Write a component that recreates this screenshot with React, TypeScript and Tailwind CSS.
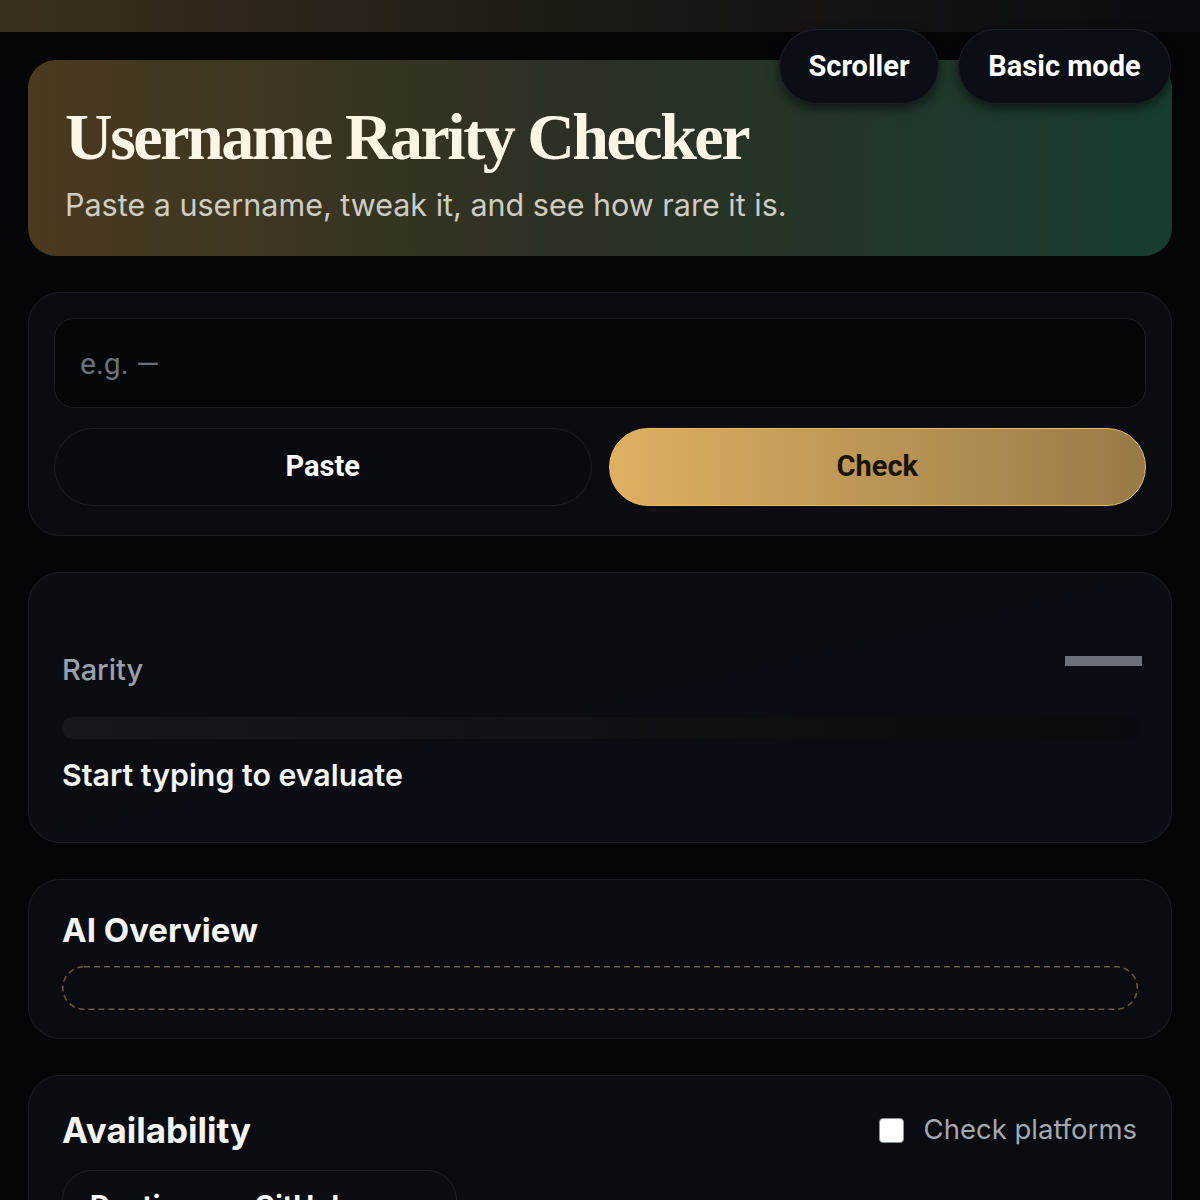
import React from "react";

export default function App() {
  return (
    <div className="min-h-[1200px] w-full bg-[#040507] relative overflow-hidden" style={{ fontFamily: "Inter, 'Noto Sans', sans-serif" }}>
      <div className="h-8 w-full bg-gradient-to-r from-[#3b301f] via-[#1c1914] to-[#0a0c12]" />
      <div className="absolute top-[29px] right-[29px] flex gap-[19px] z-10 font-['Roboto',sans-serif]">
        <button className="h-[75px] w-[160px] rounded-full bg-[#0b0e14] border border-[#1d2027] text-white text-[29px] font-bold shadow-[0_4px_12px_rgba(0,0,0,0.6)]">Scroller</button>
        <button className="h-[75px] w-[213px] rounded-full bg-[#0b0e14] border border-[#1d2027] text-white text-[29px] font-bold shadow-[0_4px_12px_rgba(0,0,0,0.6)]">Basic mode</button>
      </div>
      <div className="px-[28px] pt-[28px] flex flex-col gap-[36px]">
        <div className="h-[196px] rounded-[28px] bg-gradient-to-r from-[#4a3a1f] via-[#2a3024] to-[#173d30] pl-[37px] pt-[42px]">
          <h1 className="text-[66px] leading-[70px] font-bold text-[#fbf5e6] tracking-[-2.5px]" style={{ fontFamily: "'Liberation Serif', 'Times New Roman', serif" }}>Username Rarity Checker</h1>
          <p className="mt-[14px] text-[30.5px] leading-[38px] text-[#cfcdc2]">Paste a username, tweak it, and see how rare it is.</p>
        </div>

        <div className="rounded-[32px] border border-[#1b1e25] bg-[#0a0c11] px-[25px] pt-[25px] pb-[29px] flex flex-col gap-[20px]">
          <div className="h-[90px] rounded-[20px] border border-[#1b1e25] bg-[#05060a] flex items-center px-[25px]">
            <span className="text-[30px] text-[#6d7179] font-['Roboto',sans-serif]">e.g. —</span>
          </div>
          <div className="flex gap-[17px] font-['Roboto',sans-serif]">
            <button className="flex-1 h-[78px] rounded-full border border-[#1b1e25] bg-[#090b10] text-white text-[29px] font-bold">Paste</button>
            <button className="flex-1 h-[78px] rounded-full border-[1.5px] border-[#ecbc6a] bg-gradient-to-r from-[#deb062] to-[#987a48] text-[#17130b] text-[29px] font-bold">Check</button>
          </div>
        </div>

        <div className="h-[271px] rounded-[32px] border border-[#1b1e25] bg-gradient-to-br from-[#0b0d12] to-[#0a0d14] px-[33px] pt-[77px]">
          <div className="flex items-center justify-between h-[40px]">
            <span className="text-[29px] font-medium text-[#9aa0aa]">Rarity</span>
            <div className="w-[77px] h-[10px] bg-[#6c7079] mb-[18px] mr-[-4px]" />
          </div>
          <div className="mt-[27px] h-[22px] rounded-full bg-gradient-to-r from-[#16181d] to-[#090b0f]" />
          <div className="mt-[16px] text-[30.3px] leading-[40px] font-semibold text-[#f4f4f2]">Start typing to evaluate</div>
        </div>

        <div className="h-[160px] rounded-[32px] border border-[#1b1e25] bg-[#0a0c11] px-[33px] pt-[30px]">
          <div className="text-[33px] leading-[40px] font-bold text-[#f4f4f2]">AI Overview</div>
          <svg className="mt-[16px] block" width="1076" height="44" viewBox="0 0 1076 44">
            <rect x="0.75" y="0.75" width="1074.5" height="42.5" rx="21.25" fill="none" stroke="#6a5b3a" strokeWidth="1.5" strokeDasharray="6 4" />
          </svg>
        </div>

        <div className="h-[200px] rounded-[32px] border border-[#1b1e25] bg-[#0a0c11] px-[33px] pt-[34px]">
          <div className="flex items-center justify-between h-[40px]">
            <span className="text-[35px] font-bold text-[#f4f4f2]">Availability</span>
            <label className="flex items-center gap-[20px] mr-[1px]">
              <span className="w-[25px] h-[25px] rounded-[4px] bg-white border border-[#8a8f98]" />
              <span className="text-[27.5px] text-[#a3a8b0]">Check platforms</span>
            </label>
          </div>
          <div className="mt-[20px] w-[395px] h-[60px] rounded-[30px] border border-[#1f222a] bg-[#0b0d12] flex items-start pt-[14px] px-[27px] gap-[60px]">
            <span className="text-[28px] font-bold text-white">Destiny</span>
            <span className="text-[28px] font-bold text-white">GitHub</span>
          </div>
        </div>
      </div>
    </div>
  );
}
